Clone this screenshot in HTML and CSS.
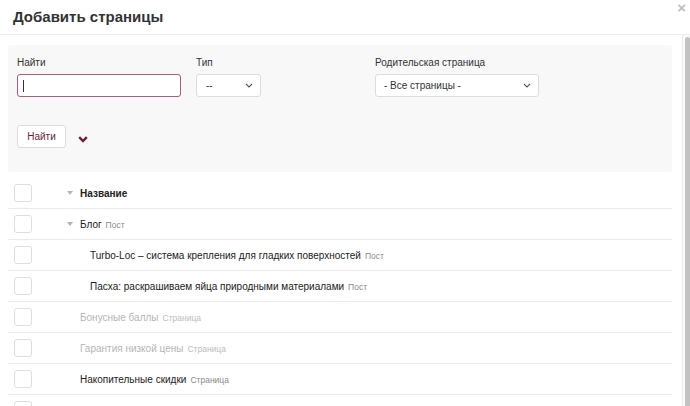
FILE: index.html
```html
<!DOCTYPE html>
<html lang="ru">
<head>
<meta charset="utf-8">
<title>Добавить страницы</title>
<link rel="stylesheet" href="styles.css">
</head>
<body>
<div class="modal">
  <header class="modal-header">
    <h1 class="modal-title">Добавить страницы</h1>
    <span class="close">×</span>
  </header>
  <div class="modal-body">
    <div class="scroll-content">
      <form class="filters">
        <div class="filter-row">
          <div class="field">
            <label class="label">Найти</label>
            <div class="input focused"><span class="caret"></span></div>
          </div>
          <div class="field">
            <label class="label">Тип</label>
            <div class="select select-small"><span>--</span><svg class="sel-arrow" viewBox="0 0 8 5" width="8" height="5"><path d="M1 1 L4 4 L7 1" fill="none" stroke="#555" stroke-width="1.1"/></svg></div>
          </div>
          <div class="field">
            <label class="label">Родительская страница</label>
            <div class="select"><span>- Все страницы -</span><svg class="sel-arrow" viewBox="0 0 8 5" width="8" height="5"><path d="M1 1 L4 4 L7 1" fill="none" stroke="#555" stroke-width="1.1"/></svg></div>
          </div>
        </div>
        <div class="actions">
          <button type="button" class="btn">Найти</button>
          <svg class="chev" viewBox="0 0 10 7" width="10" height="7"><path d="M1.2 1.2 L5 5 L8.8 1.2" fill="none" stroke="#6b1d40" stroke-width="2.4"/></svg>
        </div>
      </form>
      <div class="table">
        <div class="row head">
          <span class="cb"></span>
          <span class="name"><i class="tri"></i><b>Название</b></span>
        </div>
        <div class="row">
          <span class="cb"></span>
          <span class="name"><i class="tri pink"></i>Блог <small>Пост</small></span>
        </div>
        <div class="row">
          <span class="cb"></span>
          <span class="name child">Turbo-Loc – система крепления для гладких поверхностей <small>Пост</small></span>
        </div>
        <div class="row">
          <span class="cb"></span>
          <span class="name child">Пасха: раскрашиваем яйца природными материалами <small>Пост</small></span>
        </div>
        <div class="row disabled">
          <span class="cb"></span>
          <span class="name">Бонусные баллы <small>Страница</small></span>
        </div>
        <div class="row disabled">
          <span class="cb"></span>
          <span class="name">Гарантия низкой цены <small>Страница</small></span>
        </div>
        <div class="row">
          <span class="cb"></span>
          <span class="name">Накопительные скидки <small>Страница</small></span>
        </div>
        <div class="row disabled">
          <span class="cb"></span>
          <span class="name">Новости <small>Страница</small></span>
        </div>
      </div>
    </div>
    <div class="scrollbar"><div class="thumb"></div></div>
  </div>
</div>
</body>
</html>
```
FILE: styles.css
```css
* { box-sizing: border-box; }
html, body { margin: 0; padding: 0; background: #fff; }
body {
  font-family: "Liberation Sans", Arial, sans-serif;
  color: #222;
  overflow: hidden;
  width: 690px;
  height: 406px;
}
.modal { display: flex; flex-direction: column; height: 406px; }
.modal-header {
  height: 35px;
  border-bottom: 1px solid #ededed;
  display: flex;
  align-items: flex-start;
  justify-content: space-between;
  padding: 0 0 0 13px;
  flex: none;
}
.modal-title {
  margin: 7px 0 0;
  font-size: 15px;
  font-weight: bold;
  color: #333;
  line-height: 19px;
}
.close {
  font-size: 15px;
  line-height: 13px;
  color: #bdbdbd;
  margin: 1px 4px 0 0;
  font-weight: bold;
}
.modal-body { flex: 1; display: flex; overflow: hidden; }
.scroll-content { flex: 1; padding: 10px 10px 0 8px; overflow: hidden; }
.scrollbar {
  width: 8px;
  border-left: 1px solid #ececec;
  background: #fafafa;
  padding: 2px 0 0 2px;
  flex: none;
}
.thumb { height: 100%; background: #c2c2c2; border-radius: 3px 3px 0 0; }

.filters {
  background: #f8f8f8;
  border-radius: 3px;
  padding: 11px 9px 24px;
}
.filter-row { display: grid; grid-template-columns: 164px 164px 164px; column-gap: 15px; }
.field { display: flex; flex-direction: column; gap: 5px; }
.label { font-size: 10px; line-height: 13px; color: #333; }
.input, .select {
  height: 23px;
  background: #fff;
  border: 1px solid #dcdcdc;
  border-radius: 3px;
  display: flex;
  align-items: center;
  font-size: 10px;
  color: #333;
}
.input.focused { border-color: #a5607d; }
.caret { display: block; width: 1px; height: 12px; background: #333; margin-left: 5px; }
.select { padding: 0 7px 0 8px; justify-content: space-between; }
.select-small { width: 65px; padding-left: 9px; }
.sel-arrow { flex: none; }
.actions { display: flex; align-items: center; gap: 12px; margin-top: 28px; }
.btn {
  height: 23px;
  width: 49px;
  background: #fff;
  border: 1px solid #dcdcdc;
  border-radius: 3px;
  font-family: inherit;
  font-size: 10px;
  color: #6b1d40;
  padding: 0;
}
.chev { margin-top: 6px; }

.table { margin-top: 6px; }
.row {
  height: 31px;
  border-bottom: 1px solid #ebebeb;
  display: flex;
  align-items: center;
  padding-left: 6px;
  font-size: 10px;
  color: #222;
}
.cb {
  width: 18px;
  height: 18px;
  border: 1px solid #dedede;
  border-radius: 3px;
  background: #fff;
  flex: none;
}
.name { margin-left: 48px; display: flex; align-items: center; white-space: nowrap; }
.name.child { margin-left: 58px; }
.tri {
  width: 0; height: 0;
  border-left: 3px solid transparent;
  border-right: 3px solid transparent;
  border-top: 4px solid #b8b8b8;
  margin: 0 7px 0 -13px;
}
.tri.pink { border-top-color: #cfa3b5; }
.head b { font-weight: bold; color: #222; }
small { font-size: 8.5px; color: #8a8a8a; margin-left: 4px; padding-top: 1px; }
.disabled .name { color: #b5b5b5; }
.disabled small { color: #bdbdbd; }
```
